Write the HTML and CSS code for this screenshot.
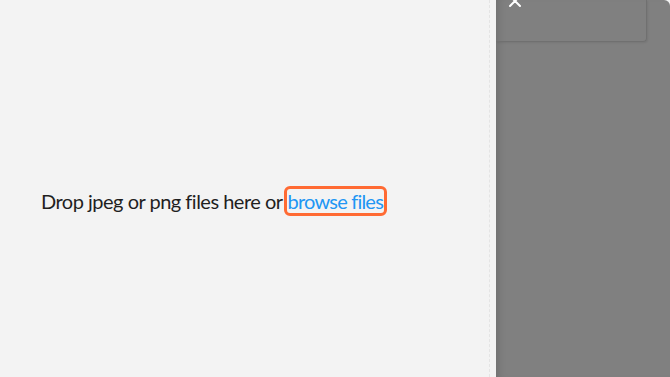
FILE: index.html
```html
<!DOCTYPE html>
<html lang="en">
<head>
<meta charset="UTF-8" />
<title>Upload</title>
<link rel="stylesheet" href="styles.css">
</head>
<body>
<div class="stage">
  <div class="dropZone">
    <p class="dropText">Drop jpeg or png files here or<a class="browseLink" href="#">browse files</a></p>
  </div>
  <div class="overlay">
    <div class="overlayBar"></div>
    <span class="closeBtn">
      <svg width="14" height="14" viewBox="0 0 14 14"><path d="M2 2 L12 12 M12 2 L2 12" stroke="#fff" stroke-width="2" stroke-linecap="round"/></svg>
    </span>
  </div>
</div>
</body>
</html>
```

FILE: styles.css
```css
/* ---------- reset ---------- */
*
{
  box-sizing:border-box;
  margin:0;
  padding:0;
}
body
{
  background:#f3f3f3;
  height:100vh;
  font-family:Lato,"Noto Sans",sans-serif;
  overflow:hidden;
}
.stage
{
  display:flex;
  height:100%;
}

/* ===== drop zone ===== */
.dropZone
{
  width:490px;
  height:100%;
  border-right:1px dashed #e4e4e4;
  display:flex;
  align-items:center;
  padding:24px 0 0 41px;
}
.dropText
{
  font-size:20px;
  letter-spacing:-0.5px;
  color:#1f1f1f;
  white-space:nowrap;
}
.browseLink
{
  color:#2196f3;
  letter-spacing:-0.8px;
  text-decoration:none;
  padding:0 1px;
  border:3px solid #ff6a33;
  border-radius:6px;
  margin-left:1px;
}

/* ===== overlay ===== */
.overlay
{
  position:relative;
  margin-left:6px;
  flex:1;
  height:100%;
  background:#808080;
  border-top-right-radius:6px;
  box-shadow:inset 8px 0 8px -6px rgba(0,0,0,.15);
}
.overlayBar
{
  width:151px;
  height:42px;
  border:1px solid #707070;
  border-top:none;
  border-left:none;
  border-bottom-right-radius:4px;
  box-shadow:1px 1px 2px rgba(0,0,0,.08);
}
.closeBtn
{
  position:absolute;
  top:-6px;
  left:12px;
  line-height:0;
}
```
